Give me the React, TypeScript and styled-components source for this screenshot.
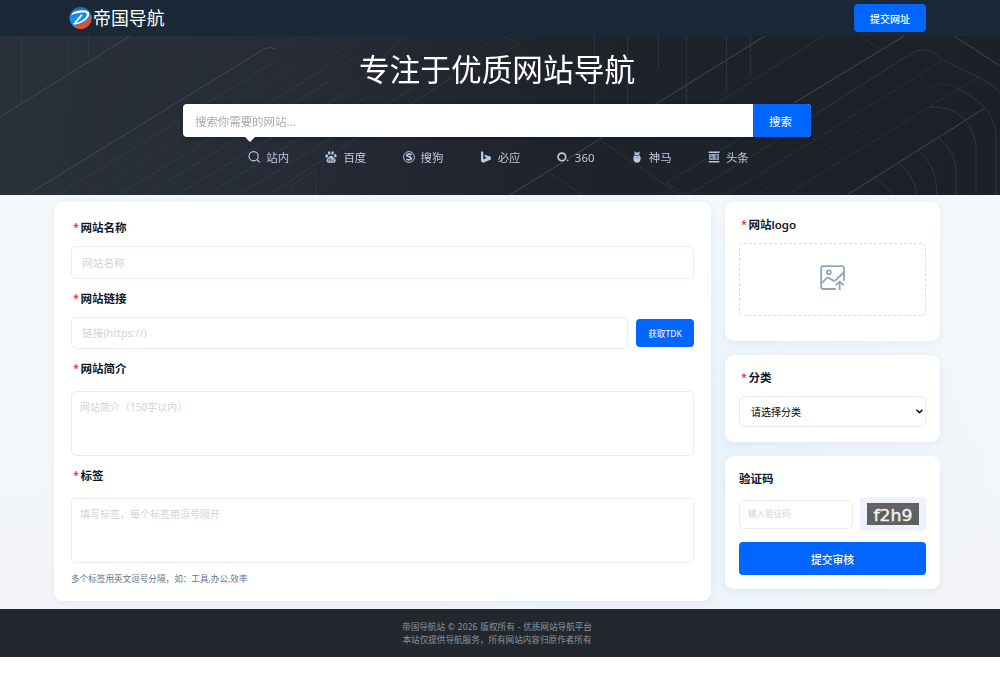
import React from "react";
import styled, { createGlobalStyle } from "styled-components";

const GlobalStyle = createGlobalStyle`
  * { box-sizing: border-box; }
  body {
    margin: 0;
    background: #fff;
    color: #0f172a;
    font-family: "Noto Sans", "Noto Sans CJK SC", sans-serif;
    overflow: hidden;
  }
  input, textarea, select, button { font-family: inherit; margin: 0; }
`;

const Header = styled.header`
  height: 36px;
  padding: 0 74px 0 69px;
  display: flex;
  align-items: center;
  justify-content: space-between;
  background: #1a2837;
`;

const Brand = styled.div`
  display: flex;
  align-items: center;
  gap: 1px;
  color: #fff;
  font-size: 17.9px;
  line-height: 36px;
`;

const Button = styled.button<{ $w: number; $h: number; $size: number; $weight?: number }>`
  flex: none;
  width: ${(p) => p.$w}px;
  height: ${(p) => p.$h}px;
  padding: 0;
  border: 0;
  border-radius: 4px;
  background: #0066ff;
  color: #fff;
  font-size: ${(p) => p.$size}px;
  font-weight: ${(p) => p.$weight ?? 400};
  white-space: nowrap;
`;

const Hero = styled.section`
  position: relative;
  height: 159px;
  display: flex;
  flex-direction: column;
  align-items: center;
  padding-right: 6px;
  background: linear-gradient(100deg, #2b313b 0%, #262b35 30%, #1f232c 55%, #1c2028 100%);
`;

const HeroLines = styled.svg`
  position: absolute;
  inset: 0;
  fill: none;
`;

const Title = styled.h1`
  position: relative;
  margin: 10px 0 0;
  height: 48px;
  line-height: 46px;
  font-size: 30.7px;
  font-weight: 400;
  color: #fff;
`;

const SearchBar = styled.form`
  position: relative;
  display: flex;
  width: 628px;
  height: 33px;
  margin-top: 10px;
  border-radius: 4px;
  background: #fff;
  box-shadow: 0 1px 4px rgba(0, 0, 0, 0.35);

  &::after {
    content: "";
    position: absolute;
    left: 61px;
    top: 32px;
    border: 6px solid transparent;
    border-top-color: #fff;
    border-bottom: 0;
  }

  button {
    border-radius: 0 4px 4px 0;
    padding-right: 3px;
  }
`;

const SearchInput = styled.input`
  flex: 1;
  min-width: 0;
  border: 0;
  padding: 1px 12px 0;
  background: transparent;
  font-size: 11.43px;
  &::placeholder { color: #a9a9a9; }
`;

const Engines = styled.nav`
  position: relative;
  display: flex;
  gap: 36.3px;
  margin-top: 11px;
  padding-left: 3px;
`;

const Engine = styled.a`
  display: flex;
  align-items: center;
  gap: 6px;
  height: 18px;
  font-size: 11.43px;
  color: #b9cbe2;
  svg { width: 12px; height: 12px; }
`;

const Main = styled.main`
  height: 414px;
  display: flex;
  align-items: flex-start;
  gap: 14px;
  padding: 7px 60px 0 54px;
  background:
    radial-gradient(ellipse 330px 250px at 690px 270px, #e7f2fc 0%, rgba(231, 242, 252, 0) 100%),
    linear-gradient(180deg, #f4f8fb 0%, #f3f7fa 60%, #f3f5f8 100%);
`;

const Card = styled.section<{ $h: number; $top: number; $side: number }>`
  height: ${(p) => p.$h}px;
  padding: ${(p) => p.$top}px ${(p) => p.$side}px 0;
  border-radius: 9px;
  background: #fff;
  box-shadow: 0 2px 8px rgba(60, 90, 150, 0.07);
`;

const FormCard = styled(Card)`
  width: 657px;
`;

const Aside = styled.aside`
  width: 215px;
  display: flex;
  flex-direction: column;
  gap: 14px;
`;

const Field = styled.div<{ $gap?: number; $after?: number }>`
  display: flex;
  flex-direction: column;
  gap: ${(p) => p.$gap ?? 10}px;
  margin-bottom: ${(p) => p.$after ?? 12}px;
`;

const Label = styled.label<{ $required?: boolean }>`
  height: 16px;
  line-height: 16px;
  padding-left: ${(p) => (p.$required ? 2 : 0)}px;
  font-size: 11.5px;
  font-weight: 600;
  color: #0f172a;
  white-space: nowrap;
  &::before {
    content: ${(p) => (p.$required ? '"*"' : "none")};
    display: inline-block;
    width: 7.5px;
    height: 15px;
    font-size: 11px;
    line-height: 14px;
    vertical-align: top;
    font-weight: 500;
    color: #ef2b2b;
  }
`;

const Input = styled.input<{ $h: number; $size?: number; $pad?: number }>`
  flex: 1 0 ${(p) => p.$h}px;
  min-width: 0;
  height: ${(p) => p.$h}px;
  padding: 0 ${(p) => p.$pad ?? 10}px;
  border: 1px solid #e9ecf4;
  border-radius: 5px;
  background: #fff;
  font-size: ${(p) => p.$size ?? 10.7}px;
  &::placeholder { color: #d3d3d3; }
`;

const TextArea = styled.textarea`
  height: 65px;
  padding: 8px;
  border: 1px solid #e9ecf4;
  border-radius: 5px;
  resize: none;
  font-size: 10px;
  line-height: 15px;
  &::placeholder { color: #d3d3d3; }
`;

const Row = styled.div<{ $gap: number }>`
  display: flex;
  align-items: center;
  gap: ${(p) => p.$gap}px;
  > input { flex: 1 1 0; }
`;

const Hint = styled.p`
  margin: 0;
  font-size: 8.6px;
  line-height: 14px;
  color: #64748b;
`;

const Upload = styled.div`
  height: 73px;
  display: flex;
  align-items: center;
  justify-content: center;
  padding-bottom: 4px;
  border: 1px dashed #d9dde5;
  border-radius: 5px;
`;

const SelectWrap = styled.div`
  position: relative;
  display: flex;

  svg {
    position: absolute;
    right: 3px;
    top: 13px;
    pointer-events: none;
  }
`;

const Select = styled.select`
  appearance: none;
  flex: 1;
  height: 31px;
  padding: 0 0 0 11px;
  border: 1px solid #e6eaf5;
  border-radius: 5px;
  background: #fff;
  color: #000;
  font-size: 10px;
`;

const Captcha = styled.div`
  width: 66px;
  height: 34px;
  padding: 6px 7px;
  border-radius: 4px;
  background: #eef1fe;
`;

const CaptchaImage = styled.svg`
  display: block;
  width: 52px;
  height: 22px;
  background: #5f5f5f;
`;

const Footer = styled.footer`
  height: 48px;
  padding: 12px 6px 0 0;
  background: #22282e;
  color: #8f9499;
  font-size: 8.6px;
  line-height: 13px;
  text-align: center;
`;

const CopyrightLine = styled.div`
  word-spacing: 0.6px;
`;

const Logo = () => (
  <svg width="23" height="24" viewBox="0 0 23 24">
    <defs>
      <linearGradient id="globe" x1="0" y1="0" x2="0" y2="1">
        <stop offset="0" stopColor="#1769c2" />
        <stop offset=".55" stopColor="#1693f0" />
        <stop offset=".75" stopColor="#1485df" />
      </linearGradient>
    </defs>
    <circle cx="11.5" cy="12" r="11" fill="url(#globe)" />
    <path d="M4 19.500 Q17 19 22.300 9.500 A11 11 0 0 1 4 20Z" fill="#f04a1d" />
    <path d="M2.200 9.200 Q3.500 5.500 10 4.600 C16 3.600 20.500 4.600 20.300 8 C20 13 12 18.300 5.500 18.600 Q3.500 18.600 4 17.300 Q12 16.600 16.500 11.500 C19.500 7.500 17.500 6.200 13 6.600 Q6 7.200 2.200 9.200Z" fill="#fff" />
    <path d="M13 8.600 L5.200 18" stroke="#fff" strokeWidth="1.700" />
  </svg>
);

const UploadIcon = () => (
  <svg width="26" height="26" viewBox="0 0 26 26" fill="none" stroke="#94a3b8" strokeWidth="1.8">
    <path d="M15.8 24H3.2Q1.2 24 1.2 22V3.2Q1.2 1.2 3.2 1.2H22Q24 1.2 24 3.2V16" />
    <circle cx="8.8" cy="7.3" r="2" />
    <path d="M1.4 18.3 L7 12.9 Q7.7 12.5 8.5 12.9 L13.8 15.8 Q14.6 16.1 15.4 15.4 L23.8 7.5" />
    <path d="M19.7 25V17.2M15.8 20.2L19.7 16.6L23.7 20.2" />
  </svg>
);

const StationIcon = () => (
  <svg viewBox="0 0 12 12" fill="none" stroke="currentColor" strokeWidth="1.15">
    <circle cx="5.6" cy="5.2" r="4.6" />
    <path d="M8.9 8.6L11.7 11.3" />
  </svg>
);

const BaiduIcon = () => (
  <svg viewBox="0 0 12 12" fill="currentColor">
    <ellipse cx="1.7" cy="5" rx="1.3" ry="1.7" />
    <ellipse cx="4.2" cy="2" rx="1.3" ry="1.8" />
    <ellipse cx="7.6" cy="2" rx="1.3" ry="1.8" />
    <ellipse cx="10.3" cy="4.8" rx="1.3" ry="1.7" />
    <path d="M6 4.7C4.2 4.7 4.1 6.3 2.8 7.3C1 8.7 1.2 11.7 3.8 11.7H8.6C11.2 11.7 11.3 8.7 9.3 7.3C8 6.3 7.8 4.7 6 4.7Z" />
    <path d="M5.3 6.8V10.2H4.2Q3.2 10.2 3.2 9.3T4.2 8.3H5.3M6.6 8.3V9.6Q6.6 10.2 7.2 10.2H8.6V8.2" fill="none" stroke="#1f232c" strokeWidth=".6" />
  </svg>
);

const SogouIcon = () => (
  <svg viewBox="0 0 12 12" fill="none" stroke="currentColor">
    <circle cx="6" cy="6" r="5.4" strokeWidth=".95" />
    <path d="M8.6 3.9C7.5 2.8 3.6 2.7 3.8 4.5C4 6 8.2 5.4 8.3 7.3C8.3 9.2 4.5 9.1 3.4 8" strokeWidth="1.7" />
  </svg>
);

const BingIcon = () => (
  <svg viewBox="0 0 12 12" fill="currentColor">
    <path d="M1 .2L3.3 1.1V8.5L6.8 6.7L5.2 6L4.2 3.5L10.9 5.8V8.5L3.3 11.7L1 10.4Z" />
  </svg>
);

const So360Icon = () => (
  <svg viewBox="0 0 12 12">
    <circle cx="4.9" cy="5.9" r="3.8" fill="none" stroke="currentColor" strokeWidth="1.7" />
    <circle cx="10.7" cy="9.5" r=".8" fill="currentColor" />
  </svg>
);

const ShenmaIcon = () => (
  <svg viewBox="0 0 12 12" fill="currentColor">
    <path d="M3.4 .2L5 1.5H7L8.7 .2L8.3 3.7Q6 5 3.7 3.7Z" />
    <path d="M3.3 4.3Q6 5.6 8.7 4.3Q10.4 6.5 9.2 9.8Q8.5 11.8 6 11.8T2.8 9.8Q1.6 6.5 3.3 4.3Z" />
    <path d="M4.4 6.5L5.5 7M7.6 6.5L6.5 7M4.7 2.7H5.3M6.8 2.7H7.4" stroke="#1f232c" strokeWidth=".6" />
  </svg>
);

const ToutiaoIcon = () => (
  <svg viewBox="0 0 12 12">
    <path d="M.6 1.2H11.4M.6 10.8H11.4" stroke="currentColor" strokeWidth="1.5" />
    <path d="M1.1 3H10.9V8.9H1.1Z" fill="currentColor" opacity=".8" />
    <path d="M2.4 4.4L3.2 5M2 6.4H5M3.9 4V6L2.2 8M4 7L5 8M6.9 4.3H9.6L7 6M7.3 4.6L9.8 6M6.6 7H10M8.3 6V8.4" stroke="#1f232c" strokeWidth=".5" fill="none" />
  </svg>
);

const engines = [
  { name: "站内", Icon: StationIcon },
  { name: "百度", Icon: BaiduIcon },
  { name: "搜狗", Icon: SogouIcon },
  { name: "必应", Icon: BingIcon },
  { name: "360", Icon: So360Icon },
  { name: "神马", Icon: ShenmaIcon },
  { name: "头条", Icon: ToutiaoIcon },
];

const HeroBackdrop = () => (
  <HeroLines width="1000" height="159" viewBox="0 36 1000 159">
    <g stroke="#434954" strokeWidth="1">
      <path d="M0 117L130 36M30 193L264 49Q269 46 275 49M510 195L765 36M794 103L904 36M847 195L985 108M954 36L1000 66" />
    </g>
    <g stroke="#3a414c" strokeWidth=".9" opacity=".8">
      <path d="M58 195L277 60M118 195L330 65M146 195L328 82M177 195L345 93M207 195L366 97M238 195L413 88M268 195L453 77" />
      <path d="M88 195L299 63M277 49L300 36M310 36L355 62M340 103L403 36M476 36L510 60M500 36L521 43L503 53" opacity=".7" />
      <path d="M291 195V188Q293 185 300 180L316 170M316 172V195" />
      <path d="M0 178L25 193M21.500 36V102M67.500 36V72M88.500 36V58" opacity=".8" />
      <path d="M594.500 36V104M627.500 36V104M658.500 36V68M686.500 36V118M726.500 36V93M750.500 36V77" opacity=".8" />
      <path d="M600 140L680 195M550 173L582 195M718 103L823 36M666 183L743 137M666 183L688 195M688 195L794 130M860 36L880 49" opacity=".8" />
      <path d="M811 117L912 53Q924 47 933 52L943 60L978 77Q992 84 1000 92" />
      <path d="M726 195L943 60M786 195L978 77" opacity=".7" />
      <path d="M755 195L925 90Q941 79 958 88" opacity=".5" />
      <path d="M929 107Q970 106 976 145V195M939 138Q957 152 956 175V195M918 150Q937 166 937 195M898 163Q915 175 917 195M873 178Q885 184 892 195M956 88Q996 106 996 138V195" />
    </g>
  </HeroLines>
);

export default function App() {
  return (
    <>
      <GlobalStyle />
      <Header>
        <Brand>
          <Logo />
          帝国导航
        </Brand>
        <Button $w={72} $h={28} $size={10} $weight={500}>提交网址</Button>
      </Header>

      <Hero>
        <HeroBackdrop />
        <Title>专注于优质网站导航</Title>
        <SearchBar>
          <SearchInput placeholder="搜索你需要的网站..." />
          <Button type="button" $w={58} $h={33} $size={11.43}>搜索</Button>
        </SearchBar>
        <Engines>
          {engines.map(({ name, Icon }) => (
            <Engine key={name}>
              <Icon />
              {name}
            </Engine>
          ))}
        </Engines>
      </Hero>

      <Main>
        <FormCard $h={399} $top={18} $side={17}>
          <Field>
            <Label $required>网站名称</Label>
            <Input $h={33} placeholder="网站名称" />
          </Field>
          <Field>
            <Label $required>网站链接</Label>
            <Row $gap={8}>
              <Input $h={32} placeholder="链接(https://)" />
              <Button $w={58} $h={28} $size={8.57}>获取TDK</Button>
            </Row>
          </Field>
          <Field $gap={14}>
            <Label $required>网站简介</Label>
            <TextArea placeholder="网站简介（150字以内）" />
          </Field>
          <Field $gap={14} $after={9}>
            <Label $required>标签</Label>
            <TextArea placeholder="填写标签，每个标签用逗号隔开" />
          </Field>
          <Hint>多个标签用英文逗号分隔，如：工具,办公,效率</Hint>
        </FormCard>

        <Aside>
          <Card $h={139} $top={15} $side={14}>
            <Field>
              <Label $required>网站logo</Label>
              <Upload>
                <UploadIcon />
              </Upload>
            </Field>
          </Card>
          <Card $h={87} $top={15} $side={14}>
            <Field>
              <Label $required>分类</Label>
              <SelectWrap>
                <Select>
                  <option>请选择分类</option>
                </Select>
                <svg width="7" height="5" viewBox="0 0 7 5" fill="none" stroke="#000" strokeWidth="1.5">
                  <path d="M.6 .8L3.500 3.700L6.400 .8" />
                </svg>
              </SelectWrap>
            </Field>
          </Card>
          <Card $h={133} $top={15} $side={14}>
            <Field $after={11}>
              <Label>验证码</Label>
              <Row $gap={7}>
                <Input $h={29} $size={8.57} $pad={8} placeholder="输入验证码" />
                <Captcha>
                  <CaptchaImage viewBox="0 0 52 22">
                    <path d="M0 3h52M4 9l12-3M20 20l14-2M38 4l9 3M2 18l6 2" stroke="#747474" strokeWidth=".7" />
                    <text
                      x="6.5"
                      y="18"
                      fill="#f2f2f2"
                      stroke="#f2f2f2"
                      strokeWidth=".4"
                      fontFamily="DejaVu Sans, sans-serif"
                      fontSize="15"
                      textLength="39"
                      lengthAdjust="spacingAndGlyphs"
                    >
                      f2h9
                    </text>
                  </CaptchaImage>
                </Captcha>
              </Row>
            </Field>
            <Button $w={187} $h={33} $size={10.8} $weight={500}>提交审核</Button>
          </Card>
        </Aside>
      </Main>

      <Footer>
        <CopyrightLine>帝国导航站 © 2026 版权所有 - 优质网站导航平台</CopyrightLine>
        <div>本站仅提供导航服务，所有网站内容归原作者所有</div>
      </Footer>
    </>
  );
}
